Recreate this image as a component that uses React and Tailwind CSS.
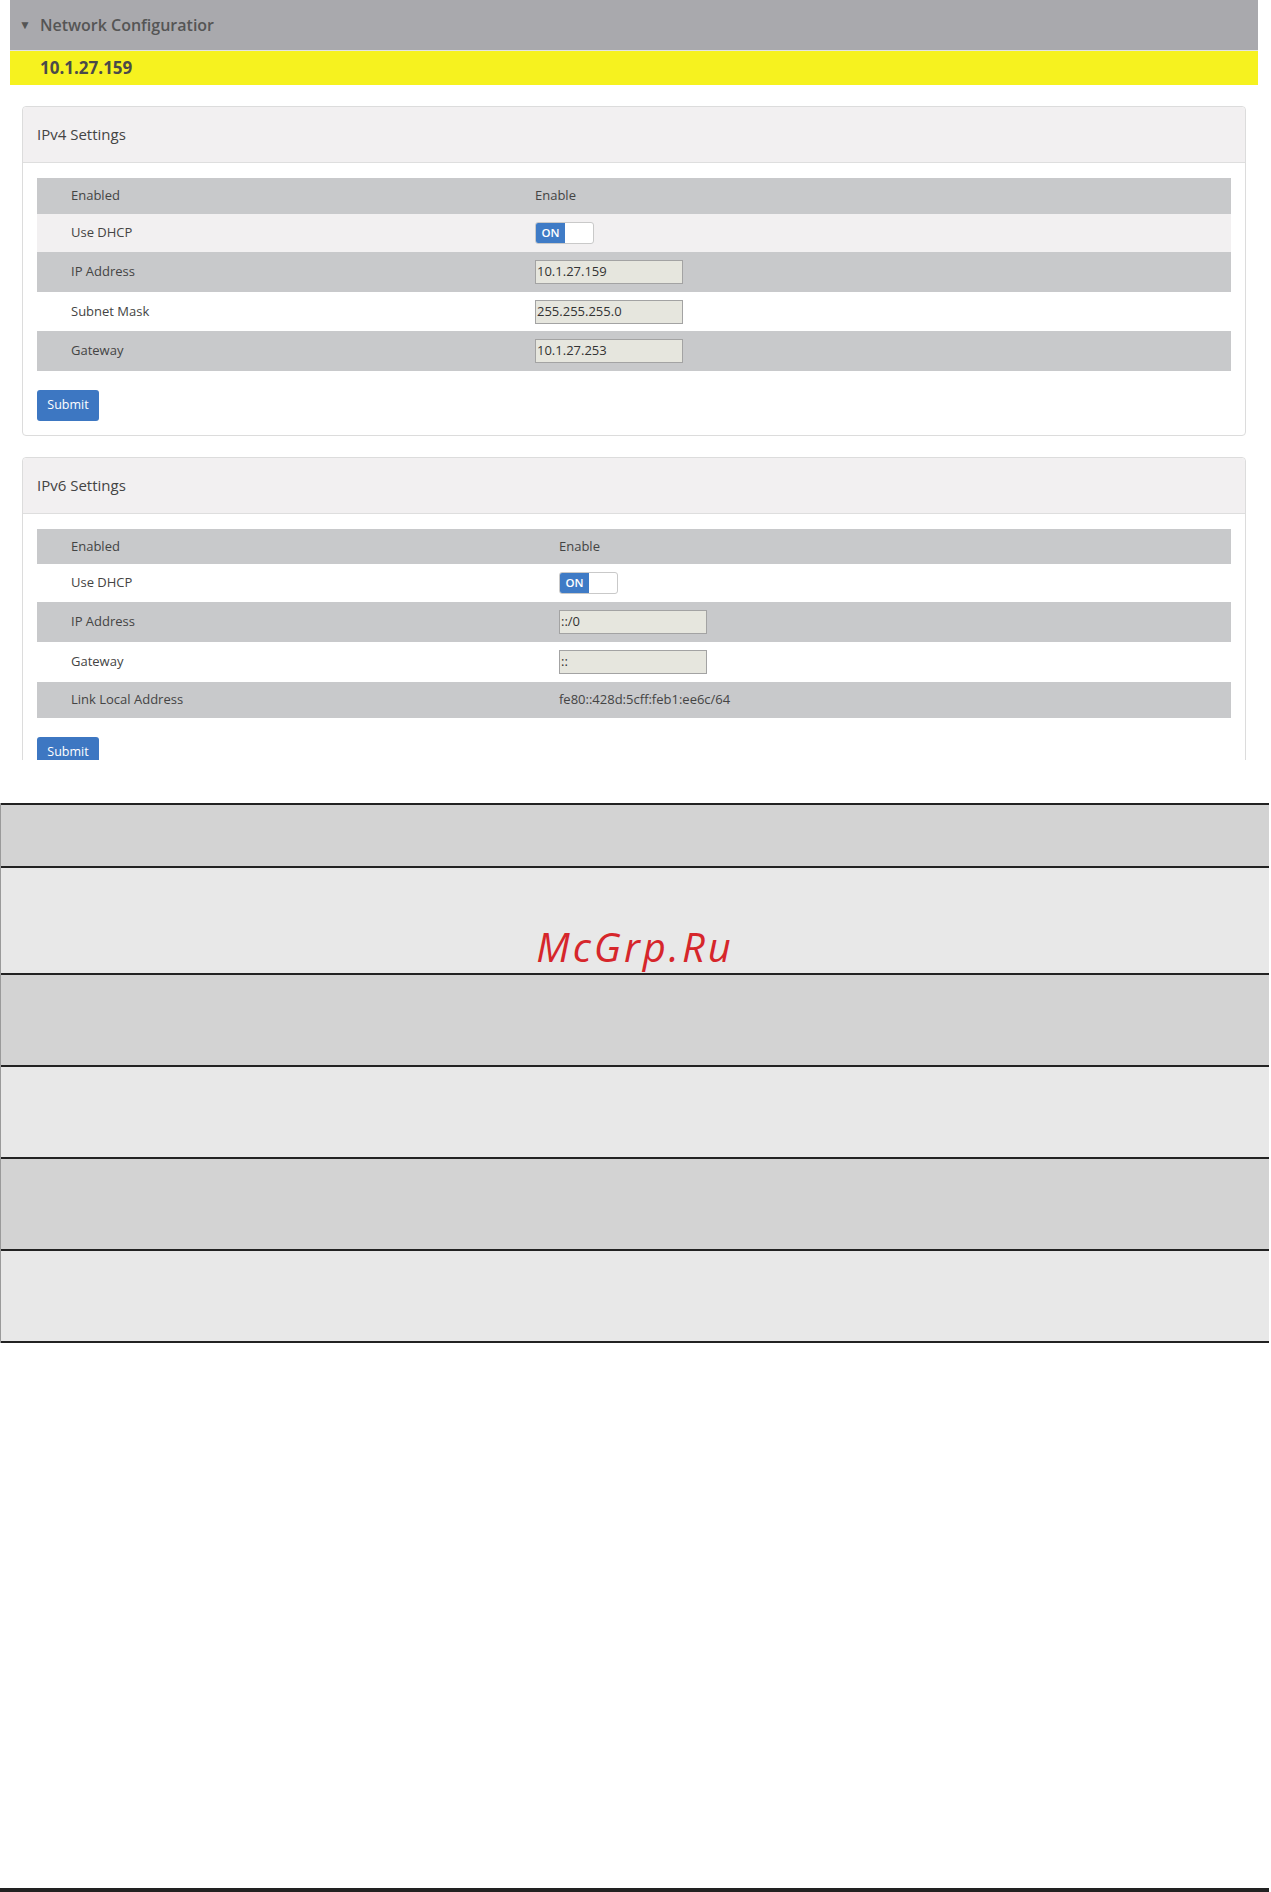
import React from 'react'

const Toggle = () => (
  <div className="flex h-[22px] w-[59px] overflow-hidden rounded-[3px] border border-[#c9c9c9] bg-white">
    <div className="flex w-[29px] items-center justify-center bg-[#3f7bc6] text-[11.5px] font-semibold text-white">
      ON
    </div>
  </div>
)

const Field = ({ value }) => (
  <div className="flex h-[24px] w-[148px] items-center border border-[#a3a3a3] bg-[#e6e6de] pl-[1px] text-[13px] text-[#333]">
    {value}
  </div>
)

const Row = ({ label, bg, h, valueX, children }) => (
  <div className={`flex items-center ${bg}`} style={{ height: h }}>
    <div className="pl-[34px] text-[13px] text-[#444]" style={{ width: valueX }}>
      {label}
    </div>
    <div className="text-[13px] text-[#444]">{children}</div>
  </div>
)

const Card = ({ title, rows, valueX, last }) => (
  <div className={`rounded-[4px] border border-[#dcdcdc] bg-white ${last ? '' : 'pb-[14px]'}`}>
    <div className="flex h-[56px] items-center rounded-t-[4px] border-b border-[#dedede] bg-[#f2f0f1] pl-[14px] text-[15px] text-[#444]">
      {title}
    </div>
    <div className="px-[14px] pt-[15px]">
      {rows.map((r) => (
        <Row key={r.label} label={r.label} bg={r.bg} h={r.h} valueX={valueX}>
          {r.value}
        </Row>
      ))}
      <button className="mt-[19px] h-[31px] w-[62px] rounded-[3px] bg-[#3d77c2] text-[12.5px] text-white">
        Submit
      </button>
    </div>
  </div>
)

const ipv4 = [
  { label: 'Enabled', bg: 'bg-[#c8c9cb]', h: 36, value: 'Enable' },
  { label: 'Use DHCP', bg: 'bg-[#f2f0f1]', h: 38, value: <Toggle /> },
  { label: 'IP Address', bg: 'bg-[#c8c9cb]', h: 40, value: <Field value="10.1.27.159" /> },
  { label: 'Subnet Mask', bg: 'bg-white', h: 39, value: <Field value="255.255.255.0" /> },
  { label: 'Gateway', bg: 'bg-[#c8c9cb]', h: 40, value: <Field value="10.1.27.253" /> },
]

const ipv6 = [
  { label: 'Enabled', bg: 'bg-[#c8c9cb]', h: 35, value: 'Enable' },
  { label: 'Use DHCP', bg: 'bg-white', h: 38, value: <Toggle /> },
  { label: 'IP Address', bg: 'bg-[#c8c9cb]', h: 40, value: <Field value="::/0" /> },
  { label: 'Gateway', bg: 'bg-white', h: 40, value: <Field value="::" /> },
  { label: 'Link Local Address', bg: 'bg-[#c8c9cb]', h: 36, value: 'fe80::428d:5cff:feb1:ee6c/64' },
]

const bands = [
  { h: 63, bg: 'bg-[#d3d3d3]' },
  { h: 107, bg: 'bg-[#e8e8e8]', mark: true },
  { h: 92, bg: 'bg-[#d3d3d3]' },
  { h: 92, bg: 'bg-[#e8e8e8]' },
  { h: 92, bg: 'bg-[#d3d3d3]' },
  { h: 92, bg: 'bg-[#e8e8e8]' },
]

export default function App() {
  return (
    <div className="relative h-[1892px] w-[1271px] bg-white font-['Open_Sans',sans-serif]">
      {/* screenshot part */}
      <div className="h-[760px] overflow-hidden pl-[10px] pr-[13px]">
        <div className="flex h-[50px] items-center bg-[#a9a9ad] pl-[9px] text-[#555]">
          <span className="mr-[9px] text-[12px]">▼</span>
          <span className="text-[16px] font-semibold">Network Configuratior</span>
        </div>
        <div className="h-[1px] bg-[#e4e4e4]" />
        <div className="flex h-[34px] items-center bg-[#f6f21f] pl-[30px] text-[17px] font-bold text-[#4a4a4a]">
          10.1.27.159
        </div>

        <div className="flex flex-col gap-[21px] px-[12px] pt-[21px]">
          <Card title="IPv4 Settings" rows={ipv4} valueX={498} />
          <Card title="IPv6 Settings" rows={ipv6} valueX={522} last />
        </div>
      </div>

      {/* manual table */}
      <div className="mt-[43px] w-[1269px] border-l border-[#9a9a9a]">
        {bands.map((b, i) => (
          <div
            key={i}
            className={`flex items-end justify-center border-t-2 border-[#222] ${b.bg}`}
            style={{ height: b.h }}
          >
            {b.mark && (
              <span className="pb-[6px] text-[40px] italic leading-none tracking-[3px] text-[#d6262b]">
                McGrp.Ru
              </span>
            )}
          </div>
        ))}
        <div className="border-t-2 border-[#222]" />
      </div>

      <div className="absolute bottom-0 left-0 h-[4px] w-[1269px] bg-[#222]" />
    </div>
  )
}
